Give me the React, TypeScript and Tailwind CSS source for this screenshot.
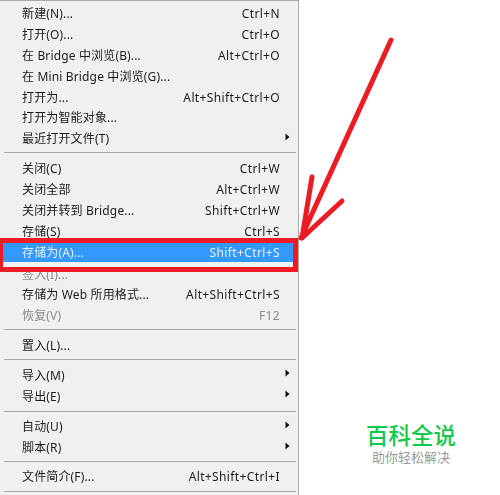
const font = "font-['Noto_Sans','Noto_Sans_CJK_SC',sans-serif]";

type Item = {
  label: string;
  shortcut?: string;
  submenu?: boolean;
  disabled?: boolean;
  active?: boolean;
};

const groups: { pad: string; items: Item[] }[] = [
  {
    pad: "pt-[3px] pb-[2.5px]",
    items: [
      { label: "新建(N)...", shortcut: "Ctrl+N" },
      { label: "打开(O)...", shortcut: "Ctrl+O" },
      { label: "在 Bridge 中浏览(B)...", shortcut: "Alt+Ctrl+O" },
      { label: "在 Mini Bridge 中浏览(G)..." },
      { label: "打开为...", shortcut: "Alt+Shift+Ctrl+O" },
      { label: "打开为智能对象..." },
      { label: "最近打开文件(T)", submenu: true },
    ],
  },
  {
    pad: "pt-[6px] pb-[2.5px]",
    items: [
      { label: "关闭(C)", shortcut: "Ctrl+W" },
      { label: "关闭全部", shortcut: "Alt+Ctrl+W" },
      { label: "关闭并转到 Bridge...", shortcut: "Shift+Ctrl+W" },
      { label: "存储(S)", shortcut: "Ctrl+S" },
      { label: "存储为(A)...", shortcut: "Shift+Ctrl+S", active: true },
      { label: "签入(I)...", disabled: true },
      { label: "存储为 Web 所用格式...", shortcut: "Alt+Shift+Ctrl+S" },
      { label: "恢复(V)", shortcut: "F12", disabled: true },
    ],
  },
  { pad: "pt-[5px] pb-[3.5px]", items: [{ label: "置入(L)..." }] },
  {
    pad: "pt-[5px] pb-[3.5px]",
    items: [
      { label: "导入(M)", submenu: true },
      { label: "导出(E)", submenu: true },
    ],
  },
  {
    pad: "pt-[5.5px] pb-[2.5px]",
    items: [
      { label: "自动(U)", submenu: true },
      { label: "脚本(R)", submenu: true },
    ],
  },
  { pad: "pt-[4.5px] pb-[3.5px]", items: [{ label: "文件简介(F)...", shortcut: "Alt+Shift+Ctrl+I" }] },
];

function Row({ item }: { item: Item }) {
  const color = item.active
    ? "bg-[#3399ff] text-[#e8f3ff] h-[22px]"
    : item.disabled
      ? "text-[#8a8a8a] h-[20.8px]"
      : "text-[#1c1c1c] h-[20.8px]";
  return (
    <div className={`flex items-center pl-[20px] text-[12px] leading-none ${color}`}>
      <span className="flex-1 tracking-[0.15px] whitespace-nowrap">{item.label}</span>
      {item.shortcut && <span className="tracking-[0.38px] whitespace-nowrap">{item.shortcut}</span>}
      <span className="flex w-[18px] pl-[5px]">
        {item.submenu && (
          <svg width="5" height="8" viewBox="0 0 5 8" className="-mt-[5px]">
            <path d="M0.5 0.5 L4.5 4 L0.5 7.5 Z" fill="#111" />
          </svg>
        )}
      </span>
    </div>
  );
}

export default function App() {
  return (
    <div className={`relative h-[495px] w-[500px] overflow-hidden bg-white ${font}`}>
      {/* 菜单 */}
      <div className="h-full w-[299px] border-t border-r border-[#a9a9a9] bg-[#f0f0f0] pl-[2px] blur-[0.45px]">
        {groups.map((group, i) => (
          <div key={i}>
            <div className={group.pad}>
              {group.items.map((item) => (
                <Row key={item.label} item={item} />
              ))}
            </div>
            <div className="mr-[2px] ml-[2px] h-px bg-[#a8a8a8]" />
          </div>
        ))}
      </div>

      {/* 红框 */}
      <div className="absolute top-[238px] left-0 flex h-[34px] w-[298px] flex-col justify-end border-t-[5px] border-r-[5px] border-b-[5px] border-l-[3px] border-[#ed1c24]">
        <div className="h-[5px] bg-[#f2f2f2]" />
      </div>

      {/* 箭头 */}
      <svg className="absolute top-0 left-0" width="500" height="495" viewBox="0 0 500 495" fill="none">
        <path
          d="M391 40 L301 238 M312 177 L302 238 M342 201 L302 238"
          stroke="#ed1c24"
          strokeWidth="5"
          strokeLinecap="round"
        />
      </svg>

      {/* 水印 */}
      <div className="absolute top-[419px] left-[365px] flex w-[92px] flex-col items-center font-['Noto_Sans_CJK_SC',sans-serif]">
        <div className="h-[30px] text-[22.5px] leading-[30px] font-medium whitespace-nowrap text-[#10c94c]">百科全说</div>
        <div className="h-[16px] text-[13px] leading-[16px] whitespace-nowrap text-[#9a9a9a]">助你轻松解决</div>
      </div>
    </div>
  );
}
